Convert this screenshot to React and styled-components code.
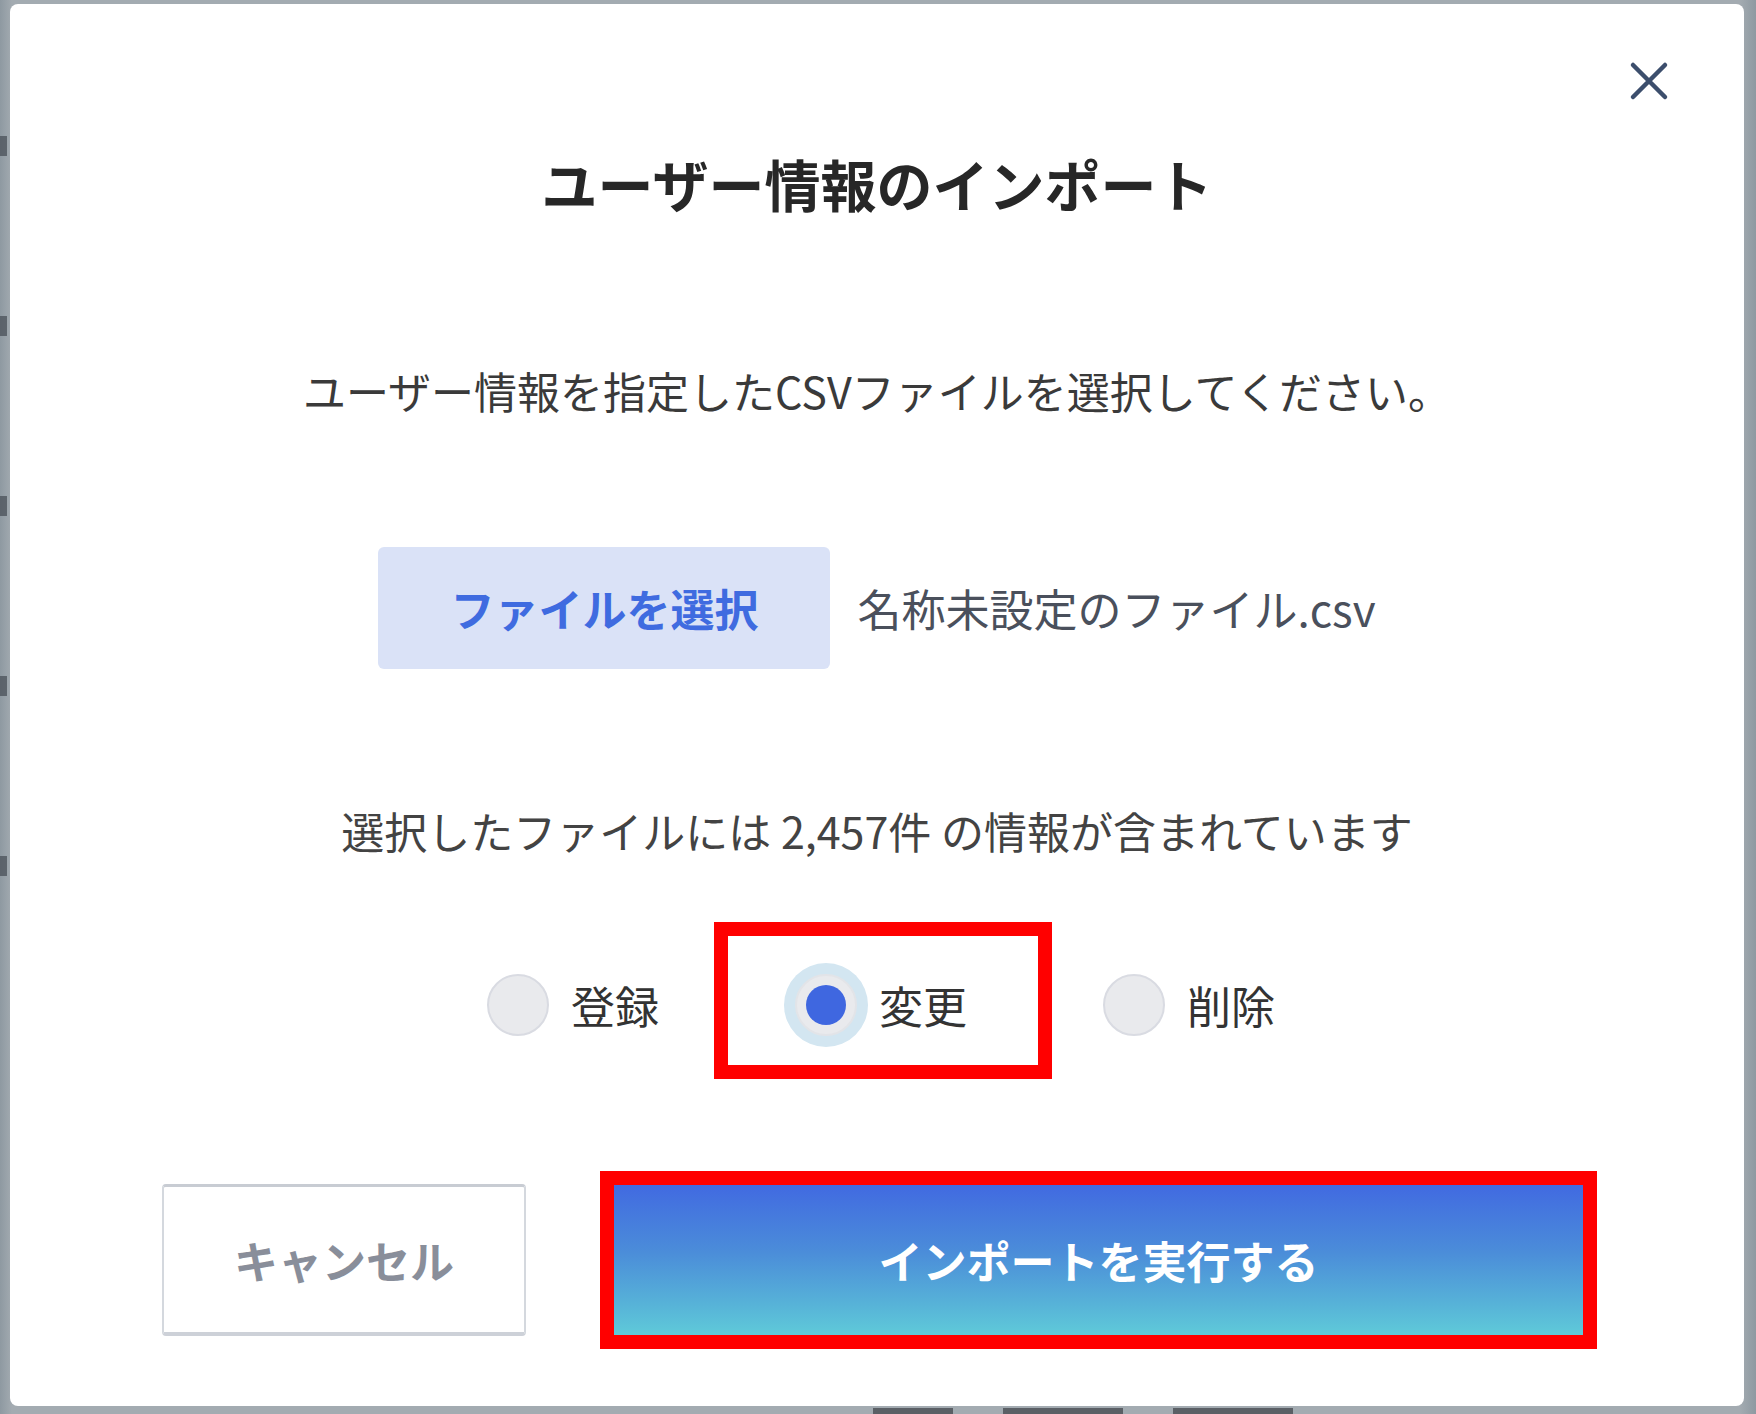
import React from 'react';
import styled, { createGlobalStyle, css } from 'styled-components';

const Global = createGlobalStyle`
  html, body { margin: 0; padding: 0; background: #98a1a8; }
  body { font-family: "Noto Sans CJK JP", "Noto Sans", sans-serif; }
  * { box-sizing: border-box; }
`;

const Page = styled.div`
  position: relative;
  width: 1756px;
  height: 1414px;
  overflow: hidden;
  padding: 4px 12px 8px 10px;
  background: linear-gradient(90deg, #8e99a1 0px, #a3abb1 12px, #a3abb1 1740px, #8e99a1 1756px);
`;

const Backdrop = styled.div`
  position: absolute;
  inset: 0;
  pointer-events: none;
`;

const EdgeMarks = styled.div`
  display: flex;
  flex-direction: column;
  gap: 160px;
  padding-top: 136px;
`;

const EdgeMark = styled.span`
  display: block;
  width: 7px;
  height: 20px;
  background: #4a5058;
  opacity: 0.75;
`;

const BottomPeek = styled.div`
  position: absolute;
  left: 873px;
  top: 1408px;
  display: flex;
  gap: 50px;
`;

const PeekBar = styled.span`
  display: block;
  height: 8px;
  width: ${(p) => p.$w}px;
  background: #3a3f45;
  opacity: 0.7;
`;

const Dialog = styled.div`
  position: relative;
  z-index: 1;
  width: 1734px;
  height: 1402px;
  background: #ffffff;
  border-radius: 8px;
  display: flex;
  flex-direction: column;
  align-items: center;
  padding-top: 139px;
`;

const CloseButton = styled.button`
  position: absolute;
  top: 56px;
  right: 74px;
  width: 42px;
  height: 42px;
  padding: 0;
  border: none;
  background: transparent;
  display: grid;
  place-items: center;
  cursor: pointer;
`;

const Title = styled.h2`
  margin: 0;
  font-size: 56px;
  line-height: 80px;
  font-weight: 700;
  color: #272727;
`;

const Text = styled.p`
  margin: ${(p) => p.$mt}px 0 0;
  font-size: 43px;
  line-height: 60px;
  color: ${(p) => p.$color || '#3a3a3a'};
  white-space: pre;
`;

const FileRow = styled.div`
  margin-top: 127px;
  display: flex;
  align-items: center;
  gap: 27px;
  height: 122px;
`;

const FileButton = styled.button`
  width: 452px;
  height: 122px;
  border: none;
  border-radius: 6px;
  background: #dae2f7;
  color: #3f6be0;
  font-family: inherit;
  font-size: 44px;
  font-weight: 700;
  cursor: pointer;
`;

const FileName = styled.span`
  font-size: 44px;
  color: #4a505c;
`;

const RadioRow = styled.div`
  margin-top: 114px;
  margin-left: 8px;
  display: flex;
  gap: 136px;
  height: 62px;
`;

const RadioItem = styled.label`
  position: relative;
  display: flex;
  align-items: center;
  gap: 22px;
  cursor: pointer;
  ${(p) =>
    p.$highlight &&
    css`
      &::after {
        content: '';
        position: absolute;
        top: -52px;
        bottom: -43px;
        left: -81px;
        right: -85px;
        border: 14px solid #ff0000;
        pointer-events: none;
      }
    `}
`;

const RadioCircle = styled.span`
  width: 62px;
  height: 62px;
  border-radius: 50%;
  background: #e9eaed;
  border: 2px solid #d9dbe2;
  display: grid;
  place-items: center;
  ${(p) =>
    p.$checked &&
    css`
      border-color: #e2e4e8;
      box-shadow: 0 0 0 11px #d3e6f1;
    `}
`;

const RadioDot = styled.span`
  width: 40px;
  height: 40px;
  border-radius: 50%;
  background: #3f67e0;
`;

const RadioLabel = styled.span`
  font-size: 44px;
  line-height: 62px;
  color: #333333;
`;

const ButtonRow = styled.div`
  margin-top: 148px;
  align-self: stretch;
  display: flex;
  align-items: flex-start;
  gap: 88px;
  padding-left: 152px;
`;

const CancelButton = styled.button`
  width: 364px;
  height: 152px;
  background: #ffffff;
  border: 2px solid #d4d8de;
  border-top: 3px solid #c8ccd3;
  border-bottom: 4px solid #cdd1d8;
  border-radius: 4px;
  color: #898e9a;
  font-family: inherit;
  font-size: 44px;
  font-weight: 700;
  cursor: pointer;
`;

const PrimaryButton = styled.button`
  margin-top: 1px;
  width: 969px;
  height: 150px;
  border: none;
  border-radius: 0;
  background: linear-gradient(180deg, #416ae1 0%, #4b8dd9 45%, #57b3d8 80%, #5fcad9 100%);
  outline: 14px solid #ff0000;
  color: #ffffff;
  font-family: inherit;
  font-size: 44px;
  font-weight: 700;
  cursor: pointer;
`;

const options = [
  { label: '登録', checked: false },
  { label: '変更', checked: true },
  { label: '削除', checked: false },
];

export default function App() {
  return (
    <>
      <Global />
      <Page>
        <Backdrop>
          <EdgeMarks>
            <EdgeMark />
            <EdgeMark />
            <EdgeMark />
            <EdgeMark />
            <EdgeMark />
          </EdgeMarks>
          <BottomPeek>
            <PeekBar $w={80} />
            <PeekBar $w={120} />
            <PeekBar $w={120} />
          </BottomPeek>
        </Backdrop>
        <Dialog>
          <CloseButton aria-label="閉じる">
            <svg width="40" height="40" viewBox="0 0 40 40">
              <path d="M4 4 L36 36 M36 4 L4 36" stroke="#3c4e6c" strokeWidth="4.5" strokeLinecap="round" fill="none" />
            </svg>
          </CloseButton>
          <Title>ユーザー情報のインポート</Title>
          <Text $mt={137}>ユーザー情報を指定したCSVファイルを選択してください。</Text>
          <FileRow>
            <FileButton>ファイルを選択</FileButton>
            <FileName>名称未設定のファイル.csv</FileName>
          </FileRow>
          <Text $mt={131} $color="#434343">選択したファイルには 2,457件 の情報が含まれています</Text>
          <RadioRow>
            {options.map((o) => (
              <RadioItem key={o.label} $highlight={o.checked}>
                <RadioCircle $checked={o.checked}>{o.checked && <RadioDot />}</RadioCircle>
                <RadioLabel>{o.label}</RadioLabel>
              </RadioItem>
            ))}
          </RadioRow>
          <ButtonRow>
            <CancelButton>キャンセル</CancelButton>
            <PrimaryButton>インポートを実行する</PrimaryButton>
          </ButtonRow>
        </Dialog>
      </Page>
    </>
  );
}
